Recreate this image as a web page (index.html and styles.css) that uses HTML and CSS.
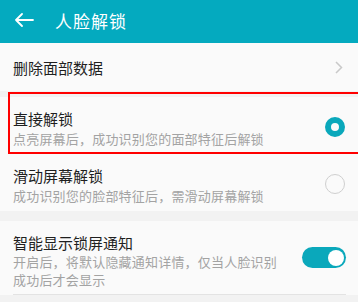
FILE: index.html
```html
<!DOCTYPE html>
<html lang="zh-CN">
<head>
<meta charset="utf-8">
<link rel="stylesheet" href="styles.css">
</head>
<body>
<div class="screen">
  <header class="appbar">
    <svg class="back" width="20" height="14" viewBox="0 0 20 14"><path d="M19 7H2M8 1L2 7l6 6" fill="none" stroke="#fff" stroke-width="1.8" stroke-linecap="round" stroke-linejoin="round"/></svg>
    <span class="title">人脸解锁</span>
  </header>
  <div class="row single">
    <span class="label">删除面部数据</span>
    <svg class="chev" width="8" height="13" viewBox="0 0 8 13"><path d="M1 1l5.5 5.5L1 12" fill="none" stroke="#c9c9c9" stroke-width="1.5"/></svg>
  </div>
  <div class="gap small"></div>
  <div class="row double">
    <div class="texts">
      <div class="label">直接解锁</div>
      <div class="sub">点亮屏幕后，成功识别您的面部特征后解锁</div>
    </div>
    <span class="radio on"></span>
  </div>
  <div class="row double">
    <div class="texts">
      <div class="label">滑动屏幕解锁</div>
      <div class="sub">成功识别您的脸部特征后，需滑动屏幕解锁</div>
    </div>
    <span class="radio"></span>
  </div>
  <div class="gap"></div>
  <div class="row toggle-row">
    <div class="inner">
      <div class="texts">
        <div class="label">智能显示锁屏通知</div>
        <div class="sub multi">开启后，将默认隐藏通知详情，仅当人脸识别<br>成功后才会显示</div>
      </div>
      <span class="toggle"><span class="knob"></span></span>
    </div>
  </div>
  <div class="mark"></div>
</div>
</body>
</html>
```
FILE: styles.css
```css
html, body {
  margin: 0;
  padding: 0;
  background: #f2f2f2;
}
.screen {
  position: relative;
  width: 358px;
  height: 302px;
  overflow: hidden;
  background: #f2f2f2;
  font-family: "Noto Sans CJK SC", "Noto Sans", sans-serif;
}
.appbar {
  height: 43px;
  background: #04aabf;
  display: flex;
  align-items: center;
  padding-left: 14px;
  box-sizing: border-box;
}
.back {
  display: block;
  margin-top: -4px;
}
.title {
  color: #fff;
  font-size: 17px;
  margin-left: 21px;
  margin-top: -3px;
  letter-spacing: 1px;
}
.row {
  background: #fafafa;
  box-sizing: border-box;
  padding-left: 13px;
}
.single {
  height: 48px;
  display: flex;
  align-items: center;
  justify-content: space-between;
  padding-right: 15px;
}
.label {
  font-size: 15px;
  line-height: 20px;
  color: #1f1f1f;
}
.single .label {
  margin-top: 2px;
}
.gap {
  height: 10px;
}
.gap.small {
  height: 6px;
}
.double {
  height: 57px;
  display: flex;
  align-items: flex-start;
  justify-content: space-between;
  padding-top: 12px;
  padding-right: 13px;
}
.sub {
  font-size: 13px;
  line-height: 20px;
  color: #a3a3a3;
  letter-spacing: 0.2px;
}
.sub.multi {
  line-height: 18px;
}
.radio {
  width: 20px;
  height: 20px;
  border-radius: 50%;
  box-sizing: border-box;
  border: 1px solid #cfcfcf;
  margin-top: 8px;
}
.radio.on {
  border: 6px solid #0aa8bb;
}
.toggle-row {
  padding-right: 12px;
}
.inner {
  display: flex;
  justify-content: space-between;
  align-items: flex-start;
  padding-top: 12px;
  height: 74px;
  box-sizing: border-box;
  border-bottom: 1px solid #e3e3e3;
}
.toggle {
  width: 44px;
  height: 21px;
  border-radius: 11px;
  background: #0aa8bb;
  margin-top: 14px;
  display: flex;
  align-items: center;
  justify-content: flex-end;
  padding-right: 2px;
  box-sizing: border-box;
}
.knob {
  width: 16px;
  height: 16px;
  border-radius: 50%;
  background: #fff;
}
.mark {
  position: absolute;
  left: 8px;
  top: 92px;
  width: 360px;
  height: 62px;
  box-sizing: border-box;
  border: 2px solid #f00;
}
```
